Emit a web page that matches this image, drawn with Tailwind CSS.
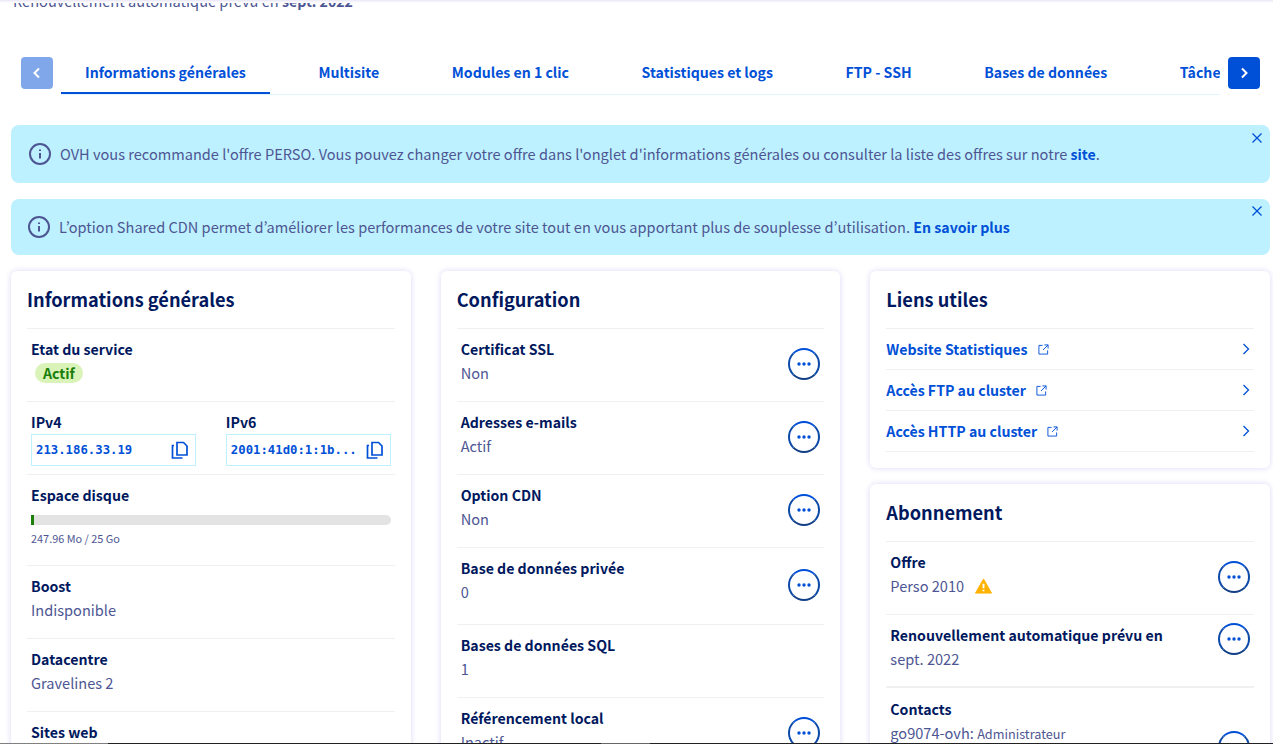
<!DOCTYPE html>
<html lang="fr">
<head>
<meta charset="utf-8">
<title>Hébergement</title>
<script src="https://cdn.jsdelivr.net/npm/@tailwindcss/browser@4"></script>
</head>
<body class="bg-white">
<div class="relative h-[744px] w-[1273px] overflow-hidden bg-white font-['Noto_Sans_CJK_KR',sans-serif] text-[14.580px] leading-6 text-[#4d5693]">
  <div class="absolute inset-x-0 top-0 z-10 h-[3px] bg-gradient-to-b from-[#ebe8f8] to-white"></div>
  <div class="absolute inset-x-0 bottom-0 z-10 flex h-px"><div class="w-[108px] bg-[#808080]"></div><div class="w-[493px] bg-[#222222]"></div><div class="w-[49px] bg-[#666666]"></div><div class="flex-1 bg-[#222222]"></div></div>

  <p class="-mt-[11px] ml-[13px] h-6">Renouvellement automatique prévu en <b class="text-[14.150px] font-semibold text-[#4d5693]">sept. 2022</b></p>

  <div class="mt-[44px] ml-[21px] flex h-[38px] w-[1239px] items-start">
    <button class="flex h-8 w-8 shrink-0 items-center justify-center rounded bg-[#0050d7]/50 text-white">
      <svg viewBox="0 0 16 16" class="h-4 w-4" fill="none" stroke="currentColor" stroke-width="2"><path d="M10 3.500 5.500 8l4.500 4.500"/></svg>
    </button>
    <div class="ml-2 h-[38px] w-[1159px] overflow-hidden border-b border-[#dff6fd]">
      <div class="flex w-[1400px] gap-[24.600px] text-[14.100px] font-semibold text-[#0050d7]">
        <a class="h-[37px] border-b-2 border-[#0050d7] px-6 pt-[3px]">Informations générales</a>
        <a class="h-[37px] px-6 pt-[3px]">Multisite</a>
        <a class="h-[37px] px-6 pt-[3px]">Modules en 1 clic</a>
        <a class="h-[37px] px-6 pt-[3px]">Statistiques et logs</a>
        <a class="h-[37px] px-6 pt-[3px]">FTP - SSH</a>
        <a class="h-[37px] px-6 pt-[3px]">Bases de données</a>
        <a class="h-[37px] px-6 pt-[3px]">Tâches planifiées</a>
      </div>
    </div>
    <button class="ml-[8px] flex h-8 w-8 shrink-0 items-center justify-center rounded bg-[#0050d7] text-white">
      <svg viewBox="0 0 16 16" class="h-4 w-4" fill="none" stroke="currentColor" stroke-width="2"><path d="M6 3.500 10.500 8 6 12.500"/></svg>
    </button>
  </div>

  <div class="relative mt-[30px] mr-[3px] ml-[11px] flex h-[58px] items-center rounded-lg bg-[#bef1ff] pl-[18px]">
    <svg viewBox="0 0 22 22" class="mr-[9px] h-[22px] w-[22px] shrink-0" fill="none" stroke="#4d5693" stroke-width="2"><circle cx="11" cy="11" r="10"/><path d="M11 10v5.500M11 6.500v1.500"/></svg>
    <span>OVH vous recommande l'offre PERSO. Vous pouvez changer votre offre dans l'onglet d'informations générales ou consulter la liste des offres sur notre <a class="text-[14.150px] font-semibold text-[#0050d7]">site</a>.</span>
    <svg viewBox="0 0 10 10" class="absolute top-[8px] right-[8px] h-2.5 w-2.5" fill="none" stroke="#0050d7" stroke-width="1.300"><path d="m.5.5 9 9M9.500.5l-9 9"/></svg>
  </div>
  <div class="relative mt-4 mr-[3px] ml-[11px] flex h-[56px] items-center rounded-lg bg-[#bef1ff] pl-[17px]">
    <svg viewBox="0 0 22 22" class="mr-[9px] h-[22px] w-[22px] shrink-0" fill="none" stroke="#4d5693" stroke-width="2"><circle cx="11" cy="11" r="10"/><path d="M11 10v5.500M11 6.500v1.500"/></svg>
    <span>L’option Shared CDN permet d’améliorer les performances de votre site tout en vous apportant plus de souplesse d’utilisation. <a class="text-[14.150px] font-semibold text-[#0050d7]">En savoir plus</a></span>
    <svg viewBox="0 0 10 10" class="absolute top-[7px] right-[8px] h-2.5 w-2.5" fill="none" stroke="#0050d7" stroke-width="1.300"><path d="m.5.5 9 9M9.500.5l-9 9"/></svg>
  </div>

  <div class="mt-4 mr-[3px] ml-[11px] grid grid-cols-3 items-start gap-[30px]">
    <!-- Informations générales -->
    <section class="rounded-md bg-white px-4 pt-4 shadow-[0_0_6px_#dcd8f6]">
      <h2 class="h-[42px] border-b border-[#f0f0f2] text-[18.200px] leading-6 font-semibold text-[#00185e]">Informations générales</h2>
      <div class="h-[73px] border-b border-[#f0f0f2] px-1 pt-2">
        <p class="text-[14.150px] font-semibold text-[#00185e]">Etat du service</p>
        <span class="ml-1 inline-flex h-5 items-center rounded-full bg-[#d9f3b8] px-2 text-[14.150px] leading-5 font-semibold text-[#1b7f0a]">Actif</span>
      </div>
      <div class="flex h-[73px] gap-[30px] border-b border-[#f0f0f2] px-1 pt-2">
        <div class="flex-1">
          <p class="text-[14.150px] font-semibold text-[#00185e]">IPv4</p>
          <div class="flex h-8 items-center justify-between border border-[#bef1ff] pr-[6px] pl-1 font-['DejaVu_Sans_Mono',monospace] text-[12.300px] font-bold text-[#0050d7]">213.186.33.19
            <svg viewBox="0 0 18 18" class="h-[18px] w-[18px]" fill="none" stroke="#0050d7" stroke-width="1.700"><path d="M6 1.500h6.500l3.500 3.500v9H6zM3 4.500h-1.500v12.500h10"/></svg>
          </div>
        </div>
        <div class="flex-1">
          <p class="text-[14.150px] font-semibold text-[#00185e]">IPv6</p>
          <div class="flex h-8 items-center justify-between border border-[#bef1ff] pr-[6px] pl-1 font-['DejaVu_Sans_Mono',monospace] text-[12.300px] font-bold text-[#0050d7]">2001:41d0:1:1b...
            <svg viewBox="0 0 18 18" class="h-[18px] w-[18px]" fill="none" stroke="#0050d7" stroke-width="1.700"><path d="M6 1.500h6.500l3.500 3.500v9H6zM3 4.500h-1.500v12.500h10"/></svg>
          </div>
        </div>
      </div>
      <div class="h-[91px] border-b border-[#f0f0f2] px-1 pt-2">
        <p class="text-[14.150px] font-semibold text-[#00185e]">Espace disque</p>
        <div class="mt-[8px] h-2.5 overflow-hidden rounded-r-full bg-[#e3e3e3]"><div class="h-full w-[3px] bg-[#1b7f0a]"></div></div>
        <p class="mt-[4px] text-[10.900px] leading-[18px] text-[#4d5693]">247.96 Mo / 25 Go</p>
      </div>
      <div class="h-[73px] border-b border-[#f0f0f2] px-1 pt-2"><p class="text-[14.150px] font-semibold text-[#00185e]">Boost</p><p>Indisponible</p></div>
      <div class="h-[73px] border-b border-[#f0f0f2] px-1 pt-2"><p class="text-[14.150px] font-semibold text-[#00185e]">Datacentre</p><p>Gravelines 2</p></div>
      <div class="h-[73px] px-1 pt-2"><p class="text-[14.150px] font-semibold text-[#00185e]">Sites web</p><p>1</p></div>
    </section>

    <!-- Configuration -->
    <section class="rounded-md bg-white px-4 pt-4 shadow-[0_0_6px_#dcd8f6]">
      <h2 class="h-[42px] border-b border-[#f0f0f2] text-[18.200px] leading-6 font-semibold text-[#00185e]">Configuration</h2>
      <div class="flex h-[73px] items-start justify-between border-b border-[#f0f0f2] pt-2 pr-1 pl-1">
        <div><p class="text-[14.150px] font-semibold text-[#00185e]">Certificat SSL</p><p>Non</p></div>
        <button class="mt-[11px] flex h-8 w-8 items-center justify-center rounded-full border-2 border-[#0d4aa8] border-t-[#0050d7] border-b-[#123f86] text-[#0050d7]"><svg viewBox="0 0 16 4" class="h-1 w-4" fill="currentColor"><circle cx="3" cy="2" r="1.700"/><circle cx="8" cy="2" r="1.700"/><circle cx="13" cy="2" r="1.700"/></svg></button>
      </div>
      <div class="flex h-[73px] items-start justify-between border-b border-[#f0f0f2] pt-2 pr-1 pl-1">
        <div><p class="text-[14.150px] font-semibold text-[#00185e]">Adresses e-mails</p><p>Actif</p></div>
        <button class="mt-[11px] flex h-8 w-8 items-center justify-center rounded-full border-2 border-[#0d4aa8] border-t-[#0050d7] border-b-[#123f86] text-[#0050d7]"><svg viewBox="0 0 16 4" class="h-1 w-4" fill="currentColor"><circle cx="3" cy="2" r="1.700"/><circle cx="8" cy="2" r="1.700"/><circle cx="13" cy="2" r="1.700"/></svg></button>
      </div>
      <div class="flex h-[73px] items-start justify-between border-b border-[#f0f0f2] pt-2 pr-1 pl-1">
        <div><p class="text-[14.150px] font-semibold text-[#00185e]">Option CDN</p><p>Non</p></div>
        <button class="mt-[11px] flex h-8 w-8 items-center justify-center rounded-full border-2 border-[#0d4aa8] border-t-[#0050d7] border-b-[#123f86] text-[#0050d7]"><svg viewBox="0 0 16 4" class="h-1 w-4" fill="currentColor"><circle cx="3" cy="2" r="1.700"/><circle cx="8" cy="2" r="1.700"/><circle cx="13" cy="2" r="1.700"/></svg></button>
      </div>
      <div class="flex h-[77px] items-start justify-between border-b border-[#f0f0f2] pt-2 pr-1 pl-1">
        <div><p class="text-[14.150px] font-semibold text-[#00185e]">Base de données privée</p><p>0</p></div>
        <button class="mt-[13px] flex h-8 w-8 items-center justify-center rounded-full border-2 border-[#0d4aa8] border-t-[#0050d7] border-b-[#123f86] text-[#0050d7]"><svg viewBox="0 0 16 4" class="h-1 w-4" fill="currentColor"><circle cx="3" cy="2" r="1.700"/><circle cx="8" cy="2" r="1.700"/><circle cx="13" cy="2" r="1.700"/></svg></button>
      </div>
      <div class="h-[73px] border-b border-[#f0f0f2] px-1 pt-2"><p class="text-[14.150px] font-semibold text-[#00185e]">Bases de données SQL</p><p>1</p></div>
      <div class="flex h-[73px] items-start justify-between pt-2 pr-1 pl-1">
        <div><p class="text-[14.150px] font-semibold text-[#00185e]">Référencement local</p><p>Inactif</p></div>
        <button class="mt-[11px] flex h-8 w-8 items-center justify-center rounded-full border-2 border-[#0d4aa8] border-t-[#0050d7] border-b-[#123f86] text-[#0050d7]"><svg viewBox="0 0 16 4" class="h-1 w-4" fill="currentColor"><circle cx="3" cy="2" r="1.700"/><circle cx="8" cy="2" r="1.700"/><circle cx="13" cy="2" r="1.700"/></svg></button>
      </div>
    </section>

    <!-- Right column -->
    <div class="flex flex-col gap-4">
      <section class="h-[197px] rounded-md bg-white px-4 pt-4 shadow-[0_0_6px_#dcd8f6]">
        <h2 class="h-[42px] border-b border-[#f0f0f2] text-[18.200px] leading-6 font-semibold text-[#00185e]">Liens utiles</h2>
        <a class="flex h-[41px] items-center border-b border-[#f0f0f2] pr-1 text-[14.150px] font-semibold text-[#0050d7]">Website Statistiques
          <svg viewBox="0 0 12 12" class="ml-[10px] h-[11px] w-[11px]" fill="none" stroke="#0050d7" stroke-width="1"><path d="M5 1.500H1v9.500h9.500V7M7 1h4v4M11 1 5.500 6.500"/></svg>
          <svg viewBox="0 0 8 12" class="ml-auto h-3 w-2" fill="none" stroke="#0050d7" stroke-width="1.300"><path d="m1.500 1 5 5-5 5"/></svg></a>
        <a class="flex h-[41px] items-center border-b border-[#f0f0f2] pr-1 text-[14.150px] font-semibold text-[#0050d7]">Accès FTP au cluster
          <svg viewBox="0 0 12 12" class="ml-[10px] h-[11px] w-[11px]" fill="none" stroke="#0050d7" stroke-width="1"><path d="M5 1.500H1v9.500h9.500V7M7 1h4v4M11 1 5.500 6.500"/></svg>
          <svg viewBox="0 0 8 12" class="ml-auto h-3 w-2" fill="none" stroke="#0050d7" stroke-width="1.300"><path d="m1.500 1 5 5-5 5"/></svg></a>
        <a class="flex h-[41px] items-center border-b border-[#f0f0f2] pr-1 text-[14.150px] font-semibold text-[#0050d7]">Accès HTTP au cluster
          <svg viewBox="0 0 12 12" class="ml-[10px] h-[11px] w-[11px]" fill="none" stroke="#0050d7" stroke-width="1"><path d="M5 1.500H1v9.500h9.500V7M7 1h4v4M11 1 5.500 6.500"/></svg>
          <svg viewBox="0 0 8 12" class="ml-auto h-3 w-2" fill="none" stroke="#0050d7" stroke-width="1.300"><path d="m1.500 1 5 5-5 5"/></svg></a>
      </section>
      <section class="rounded-md bg-white px-4 pt-4 shadow-[0_0_6px_#dcd8f6]">
        <h2 class="h-[42px] border-b border-[#f0f0f2] text-[18.200px] leading-6 font-semibold text-[#00185e]">Abonnement</h2>
        <div class="flex h-[73px] items-start justify-between border-b border-[#f0f0f2] pt-2 pr-1 pl-1">
          <div><p class="text-[14.150px] font-semibold text-[#00185e]">Offre</p><p class="flex items-center">Perso 2010
            <svg viewBox="0 0 18 16" class="ml-[11px] h-4 w-[17px]"><path d="M9 .5 17.500 15.500H.5z" fill="#ffb300" stroke="#ffb300" stroke-linejoin="round"/><path d="M9 5.500v5M9 12v1.500" stroke="#fff" stroke-width="2"/></svg></p></div>
          <button class="mt-[11px] flex h-8 w-8 items-center justify-center rounded-full border-2 border-[#0d4aa8] border-t-[#0050d7] border-b-[#123f86] text-[#0050d7]"><svg viewBox="0 0 16 4" class="h-1 w-4" fill="currentColor"><circle cx="3" cy="2" r="1.700"/><circle cx="8" cy="2" r="1.700"/><circle cx="13" cy="2" r="1.700"/></svg></button>
        </div>
        <div class="flex h-[73px] items-start justify-between border-b-2 border-[#f0f0f2] pt-2 pr-1 pl-1">
          <div><p class="text-[14.150px] font-semibold text-[#00185e]">Renouvellement automatique prévu en</p><p>sept. 2022</p></div>
          <button class="mt-0 flex h-8 w-8 items-center justify-center rounded-full border-2 border-[#0d4aa8] border-t-[#0050d7] border-b-[#123f86] text-[#0050d7]"><svg viewBox="0 0 16 4" class="h-1 w-4" fill="currentColor"><circle cx="3" cy="2" r="1.700"/><circle cx="8" cy="2" r="1.700"/><circle cx="13" cy="2" r="1.700"/></svg></button>
        </div>
        <div class="flex h-[73px] items-start justify-between pt-[9px] pr-1 pl-1">
          <div><p class="text-[14.150px] font-semibold text-[#00185e]">Contacts</p><p>go9074-ovh: <span class="text-[12.700px]">Administrateur</span></p></div>
          <button class="mt-[34px] flex h-8 w-8 items-center justify-center rounded-full border-2 border-[#0d4aa8] border-t-[#0050d7] border-b-[#123f86] text-[#0050d7]"><svg viewBox="0 0 16 4" class="h-1 w-4" fill="currentColor"><circle cx="3" cy="2" r="1.700"/><circle cx="8" cy="2" r="1.700"/><circle cx="13" cy="2" r="1.700"/></svg></button>
        </div>
      </section>
    </div>
  </div>
</div>
</body>
</html>
